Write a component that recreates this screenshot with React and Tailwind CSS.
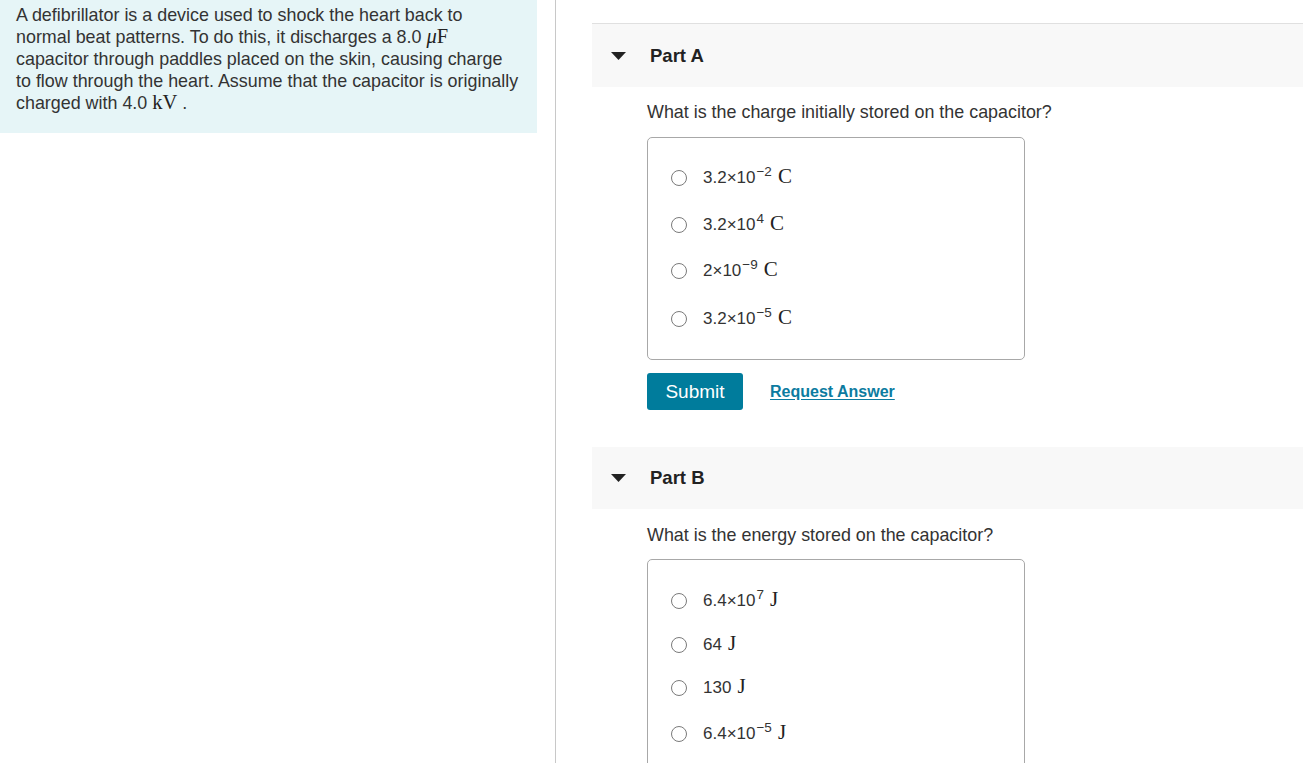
import React from "react";

const sans = { fontFamily: '"Liberation Sans", Arial, sans-serif' };

function Triangle() {
  return (
    <svg width="15" height="8" viewBox="0 0 15 8" className="block">
      <path d="M0 0 H15 L7.5 8 Z" fill="#222" />
    </svg>
  );
}

function Radio() {
  return <div className="w-[16px] h-[16px] rounded-full border border-[#7a7a7a] bg-white shrink-0" />;
}

function Opt({ base, exp, unit, mt }) {
  return (
    <div className={`flex items-center h-[24px] ${mt}`}>
      <div className="w-[16px] ml-[23px] mr-[16px] flex justify-center">
        <Radio />
      </div>
      <span className="text-[17px] text-[#333] whitespace-nowrap leading-[24px]">
        {base}
        {exp && <sup className="text-[13.5px] relative top-[-7px] ml-[1px]">{exp}</sup>}
        <span className="font-['Liberation_Serif',serif] text-[21px] leading-none text-[#222] ml-[6px]">{unit}</span>
      </span>
    </div>
  );
}

function Header({ label, border }) {
  return (
    <div
      className={`flex items-center bg-[#f8f8f8] ${border ? "border-t border-[#e0e0e0] h-[64px]" : "h-[62px]"}`}
    >
      <div className="ml-[19px] mr-[24px]">
        <Triangle />
      </div>
      <span className="text-[18.5px] font-bold text-[#222]">{label}</span>
    </div>
  );
}

export default function App() {
  return (
    <div className="flex w-[1303px] h-[763px] overflow-hidden bg-white text-[#333]" style={sans}>
      <div className="w-[556px] shrink-0 border-r border-[#c8c8c8] h-full">
        <div className="w-[537px] bg-[#e6f5f7] pl-[16px] pt-[4px] pb-[19px] text-[17.9px] leading-[22px] text-[#333]">
          <div className="whitespace-nowrap h-[22px]">A defibrillator is a device used to shock the heart back to</div>
          <div className="whitespace-nowrap h-[22px]">
            normal beat patterns. To do this, it discharges a 8.0{" "}
            <span className="font-['Liberation_Serif',serif] text-[20.5px] leading-none text-[#222]">
              <i>μ</i>F
            </span>
          </div>
          <div className="whitespace-nowrap h-[22px]">capacitor through paddles placed on the skin, causing charge</div>
          <div className="whitespace-nowrap h-[22px]">to flow through the heart. Assume that the capacitor is originally</div>
          <div className="whitespace-nowrap h-[22px]">
            charged with 4.0{" "}
            <span className="font-['Liberation_Serif',serif] text-[20.5px] leading-none text-[#222]">kV</span> .
          </div>
        </div>
      </div>

      <div className="flex-1 pl-[36px] pt-[23px]">
        <Header label="Part A" border />
        <div className="pl-[55px]">
          <div className="mt-[14px] text-[17.9px] leading-[22px]">What is the charge initially stored on the capacitor?</div>
          <div className="mt-[14px] w-[378px] border border-[#a8a8a8] rounded-[5px] pt-[28px] pb-[28px]">
            <Opt base="3.2×10" exp="−2" unit="C" mt="" />
            <Opt base="3.2×10" exp="4" unit="C" mt="mt-[23px]" />
            <Opt base="2×10" exp="−9" unit="C" mt="mt-[22px]" />
            <Opt base="3.2×10" exp="−5" unit="C" mt="mt-[24px]" />
          </div>
          <div className="flex items-center mt-[13px]">
            <div className="w-[96px] h-[37px] rounded-[3px] bg-[#007c9c] text-white text-[19px] flex items-center justify-center pt-[1px]">
              Submit
            </div>
            <span className="ml-[27px] text-[16px] font-bold text-[#0c7ba0] underline underline-offset-[2px]">
              Request Answer
            </span>
          </div>
        </div>
        <div className="mt-[37px]">
          <Header label="Part B" />
        </div>
        <div className="pl-[55px]">
          <div className="mt-[15px] text-[17.9px] leading-[22px]">What is the energy stored on the capacitor?</div>
          <div className="mt-[13px] w-[378px] h-[260px] border border-[#a8a8a8] rounded-[5px] pt-[29px]">
            <Opt base="6.4×10" exp="7" unit="J" mt="" />
            <Opt base="64" unit="J" mt="mt-[20px]" />
            <Opt base="130" unit="J" mt="mt-[19px]" />
            <Opt base="6.4×10" exp="−5" unit="J" mt="mt-[22px]" />
          </div>
        </div>
      </div>
    </div>
  );
}
